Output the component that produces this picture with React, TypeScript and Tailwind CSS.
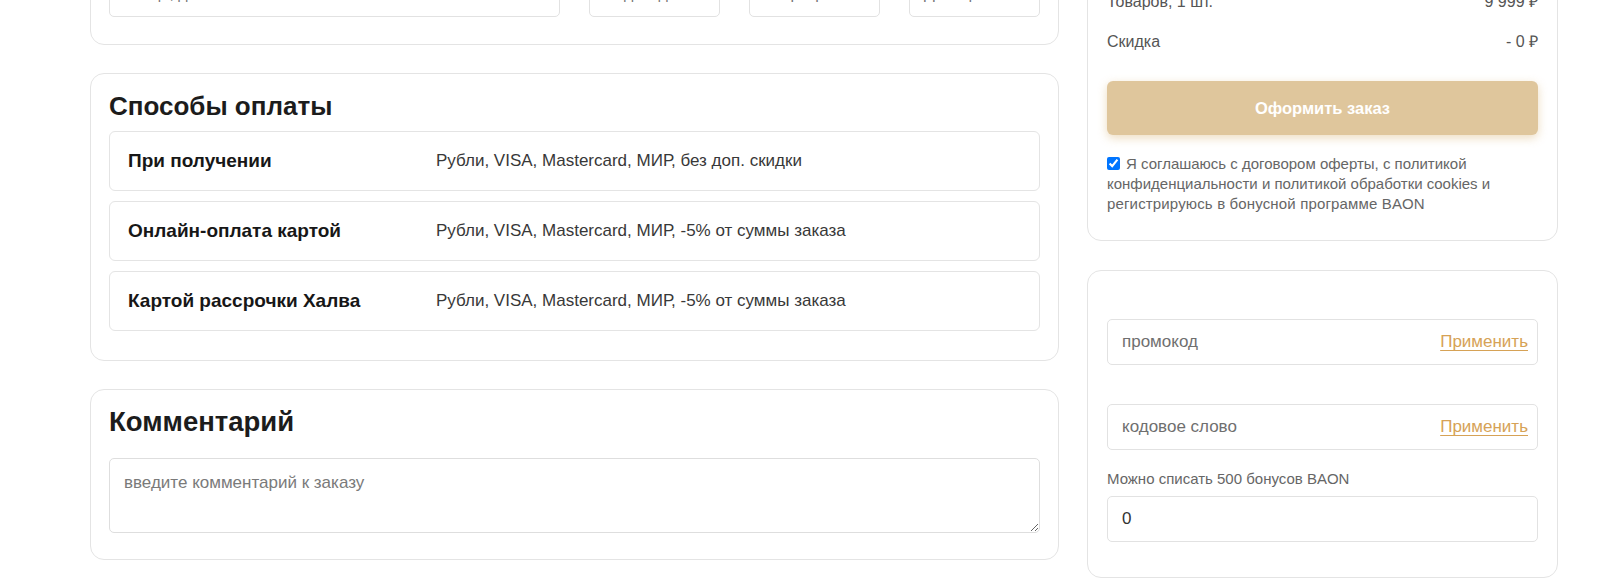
import React from "react";

const font = "font-['Liberation_Sans',Arial,sans-serif]";

function PayRow({ label, desc }: { label: string; desc: string }) {
  return (
    <div className="h-[60px] mb-[10px] border border-[#e4e4e4] rounded-[6px] flex items-center pl-[18px] pr-[18px]">
      <div className="w-[308px] shrink-0 text-[19px] font-bold text-[#171717]">{label}</div>
      <div className="text-[17px] text-[#383838]">{desc}</div>
    </div>
  );
}

function FieldInput({ placeholder, action }: { placeholder: string; action?: string }) {
  return (
    <div className="h-[46px] border border-[#e2e2e2] rounded-[5px] flex items-center justify-between pl-[14px] pr-[9px]">
      <span className="text-[17px] text-[#6f6f6f]">{placeholder}</span>
      {action && (
        <span className="text-[17px] text-[#d6a256] underline underline-offset-[3px]">{action}</span>
      )}
    </div>
  );
}

export default function App() {
  return (
    <div className={`w-[1600px] h-[581px] overflow-hidden bg-white ${font}`}>
      <div className="flex items-start pl-[90px] gap-[28px]">
        {/* Left column */}
        <div className="w-[969px] flex flex-col gap-[28px] -mt-[48px]">
          {/* Address card (top cut off) */}
          <div className="border border-[#e4e4e4] rounded-[14px] pt-[18px] px-[18px] pb-[27px]">
            <div className="flex gap-[29px]">
              {[
                { w: "w-[451px]", t: "Улица, дом" },
                { w: "w-[131px]", t: "Подъезд" },
                { w: "w-[131px]", t: "Квартира" },
                { w: "w-[131px]", t: "Домофон" },
              ].map((f, i) => (
                <div
                  key={i}
                  className={`${f.w} h-[46px] border border-[#e2e2e2] rounded-[5px] flex items-center pl-[14px] text-[16px] text-[#777]`}
                >
                  {f.t}
                </div>
              ))}
            </div>
          </div>

          {/* Payment methods */}
          <div className="border border-[#e4e4e4] rounded-[14px] pt-[18px] px-[18px] pb-[19px]">
            <h2 className="h-[28px] leading-[28px] mb-[11px] text-[26px] font-bold text-[#1c1c1c]">Способы оплаты</h2>
            <PayRow label="При получении" desc="Рубли, VISA, Mastercard, МИР, без доп. скидки" />
            <PayRow label="Онлайн-оплата картой" desc="Рубли, VISA, Mastercard, МИР, -5% от суммы заказа" />
            <PayRow label="Картой рассрочки Халва" desc="Рубли, VISA, Mastercard, МИР, -5% от суммы заказа" />
          </div>

          {/* Comment */}
          <div className="border border-[#e4e4e4] rounded-[14px] pt-[18px] px-[18px] pb-[26px]">
            <h2 className="h-[28px] leading-[28px] mb-[22px] text-[27.5px] font-bold text-[#1c1c1c]">Комментарий</h2>
            <textarea
              readOnly
              placeholder="введите комментарий к заказу"
              className="block w-full h-[75px] border border-[#dedede] rounded-[5px] pt-[13px] px-[14px] text-[17px] leading-[22px] text-[#333] placeholder:text-[#7a7a7a] outline-none"
            />
          </div>
        </div>

        {/* Right column */}
        <div className="w-[471px] flex flex-col gap-[29px] -mt-[29px]">
          <div className="border border-[#e4e4e4] rounded-[14px] pt-[18px] px-[19px] pb-[26px]">
            <div className="flex justify-between h-[24px] leading-[24px] mb-[16px] text-[16px] text-[#555]">
              <span>Товаров, 1 шт.</span>
              <span>9 999 ₽</span>
            </div>
            <div className="flex justify-between h-[24px] leading-[24px] text-[16px] text-[#555]">
              <span>Скидка</span>
              <span>- 0 ₽</span>
            </div>
            <button className="mt-[27px] w-full h-[54px] rounded-[6px] bg-[#dfc69c] text-white text-[16.5px] font-bold shadow-[0_3px_10px_rgba(214,178,116,0.45)]">
              Оформить заказ
            </button>
            <div className="mt-[19px] text-[15px] leading-[20px] text-[#666]">
              <div className="whitespace-nowrap">
                <input
                  type="checkbox"
                  defaultChecked
                  className="w-[13px] h-[13px] align-[-1px] mr-[6px] accent-[#0075ff]"
                />
                Я соглашаюсь с договором оферты, с политикой
              </div>
              <div className="whitespace-nowrap">конфиденциальности и политикой обработки cookies и</div>
              <div className="whitespace-nowrap tracking-[0.15px]">регистрируюсь в бонусной программе BAON</div>
            </div>
          </div>

          <div className="border border-[#e4e4e4] rounded-[14px] pt-[48px] px-[19px] pb-[35px]">
            <FieldInput placeholder="промокод" action="Применить" />
            <div className="mt-[39px]">
              <FieldInput placeholder="кодовое слово" action="Применить" />
            </div>
            <div className="mt-[19px] h-[20px] leading-[20px] text-[15px] text-[#666]">Можно списать 500 бонусов BAON</div>
            <div className="mt-[7px] h-[46px] border border-[#e2e2e2] rounded-[5px] flex items-center pl-[14px] text-[17px] text-[#333]">
              0
            </div>
          </div>
        </div>
      </div>
    </div>
  );
}
